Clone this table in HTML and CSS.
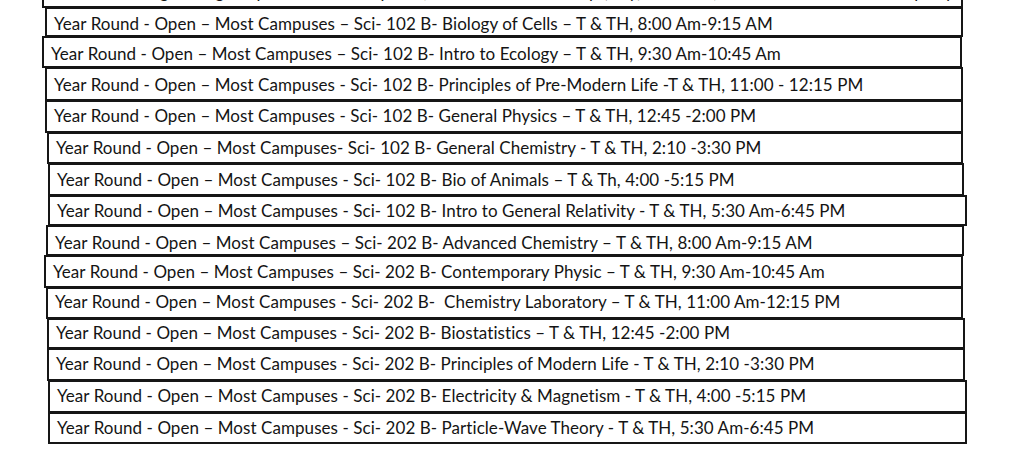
FILE: index.html
```html
<!DOCTYPE html>
<html lang="en">
<head>
<meta charset="utf-8">
<title>Course Schedule</title>
<link rel="stylesheet" href="styles.css">
</head>
<body>
<div class="list">
  <div class="row row-cut">Year Round Registering – Open – Most Campuses, Sci- 102 B- Lab Group (Day) – T &amp; TH, Sessions – Schedule Groups by Campus</div>
  <div class="row">Year Round - Open – Most Campuses – Sci- 102 B- Biology of Cells – T &amp; TH, 8:00 Am-9:15 AM</div>
  <div class="row">Year Round - Open – Most Campuses – Sci- 102 B- Intro to Ecology – T &amp; TH, 9:30 Am-10:45 Am</div>
  <div class="row">Year Round - Open – Most Campuses - Sci- 102 B- Principles of Pre-Modern Life -T &amp; TH, 11:00 - 12:15 PM</div>
  <div class="row">Year Round - Open – Most Campuses - Sci- 102 B- General Physics – T &amp; TH, 12:45 -2:00 PM</div>
  <div class="row">Year Round - Open – Most Campuses- Sci- 102 B- General Chemistry - T &amp; TH, 2:10 -3:30 PM</div>
  <div class="row">Year Round - Open – Most Campuses - Sci- 102 B- Bio of Animals – T &amp; Th, 4:00 -5:15 PM</div>
  <div class="row">Year Round - Open – Most Campuses - Sci- 102 B- Intro to General Relativity - T &amp; TH, 5:30 Am-6:45 PM</div>
  <div class="row">Year Round - Open – Most Campuses – Sci- 202 B- Advanced Chemistry – T &amp; TH, 8:00 Am-9:15 AM</div>
  <div class="row">Year Round - Open – Most Campuses – Sci- 202 B- Contemporary Physic – T &amp; TH, 9:30 Am-10:45 Am</div>
  <div class="row">Year Round - Open – Most Campuses - Sci- 202 B-  Chemistry Laboratory – T &amp; TH, 11:00 Am-12:15 PM</div>
  <div class="row">Year Round - Open – Most Campuses - Sci- 202 B- Biostatistics – T &amp; TH, 12:45 -2:00 PM</div>
  <div class="row">Year Round - Open – Most Campuses - Sci- 202 B- Principles of Modern Life - T &amp; TH, 2:10 -3:30 PM</div>
  <div class="row">Year Round - Open – Most Campuses - Sci- 202 B- Electricity &amp; Magnetism - T &amp; TH, 4:00 -5:15 PM</div>
  <div class="row">Year Round - Open – Most Campuses - Sci- 202 B- Particle-Wave Theory - T &amp; TH, 5:30 Am-6:45 PM</div>
</div>
</body>
</html>
```
FILE: styles.css
```css
html, body {
  margin: 0;
  padding: 0;
  background: #ffffff;
}

body {
  width: 1024px;
  height: 452px;
  overflow: hidden;
  font-family: Lato, "Open Sans", sans-serif;
  font-size: 17px;
  line-height: 20px;
  letter-spacing: 0.06px;
  color: #141414;
}

.list {
  display: flex;
  flex-direction: column;
  align-items: flex-start;
}

.row {
  box-sizing: border-box;
  border: 2px solid #161616;
  padding-left: 7px;
  white-space: pre;
  overflow: hidden;
  margin-top: -1px;
  margin-left: var(--ml);
  width: var(--w);
  height: var(--h);
  padding-top: var(--pt);
  background: #ffffff;
}

.row-cut {
  margin-top: -20px;
  --ml: 42px;
  --w: 921px;
  --h: 28px;
  --pt: 0px;
}

.row:nth-child(2)  { --ml: 45px; --w: 918px; --h: 30px; --pt: 5px; }
.row:nth-child(3)  { --ml: 42px; --w: 920px; --h: 32px; --pt: 6px; }
.row:nth-child(4)  { --ml: 45px; --w: 918px; --h: 34px; --pt: 6px; }
.row:nth-child(5)  { --ml: 45px; --w: 918px; --h: 33px; --pt: 4px; }
.row:nth-child(6)  { --ml: 47px; --w: 916px; --h: 32px; --pt: 4px; }
.row:nth-child(7)  { --ml: 48px; --w: 916px; --h: 33px; --pt: 5px; }
.row:nth-child(8)  { --ml: 48px; --w: 919px; --h: 31px; --pt: 4px; }
.row:nth-child(9)  { --ml: 46px; --w: 918px; --h: 31px; --pt: 6px; }
.row:nth-child(10) { --ml: 44px; --w: 919px; --h: 33px; --pt: 5px; }
.row:nth-child(11) { --ml: 46px; --w: 917px; --h: 32px; --pt: 3px; }
.row:nth-child(12) { --ml: 47px; --w: 918px; --h: 31px; --pt: 3px; }
.row:nth-child(13) { --ml: 47px; --w: 918px; --h: 33px; --pt: 4px; }
.row:nth-child(14) { --ml: 48px; --w: 919px; --h: 33px; --pt: 4px; }
.row:nth-child(15) { --ml: 48px; --w: 919px; --h: 32px; --pt: 4px; }
```
